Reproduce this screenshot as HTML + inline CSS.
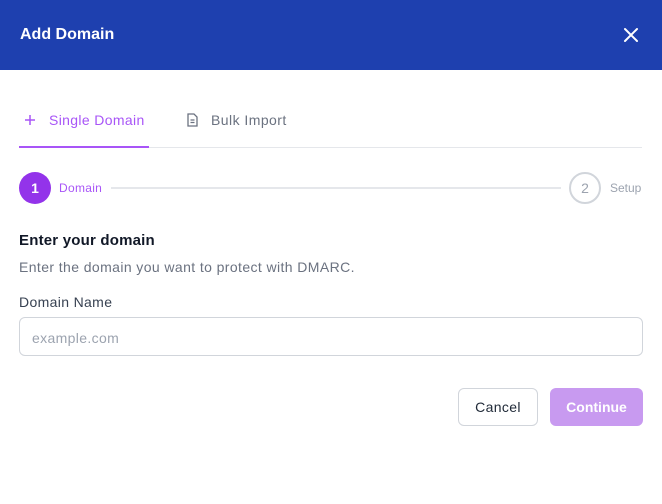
<!DOCTYPE html>
<html><head><meta charset="utf-8"><style>
*{box-sizing:border-box;margin:0;padding:0}
body{width:662px;height:504px;background:#fff;font-family:"Liberation Sans",sans-serif;position:relative;overflow:hidden}
.hdr{position:absolute;left:0;top:0;width:662px;height:70px;background:#1e40af;color:#fff}
.hdr h1{position:absolute;left:20px;top:26px;font-size:16px;font-weight:bold}
.abs{position:absolute}
.t{letter-spacing:0.35px}
</style></head><body>
<div class="hdr"><h1>Add Domain</h1>
<svg class="abs" style="left:622px;top:26px" width="18" height="18" viewBox="0 0 18 18"><path d="M3 3L15 15M15 3L3 15" stroke="#fff" stroke-width="2" stroke-linecap="round"/></svg>
</div>
<div class="abs" style="left:19px;top:147px;width:623px;height:1px;background:#e5e7eb"></div>
<div class="abs" style="left:19px;top:146px;width:130px;height:2px;background:#a855f7"></div>
<svg class="abs" style="left:24px;top:114px" width="12" height="12" viewBox="0 0 12 12"><path d="M6 1V11M1 6H11" stroke="#a855f7" stroke-width="1.5"/></svg>
<div class="abs t" style="left:49px;top:112px;font-size:14px;color:#a855f7">Single Domain</div>
<svg class="abs" style="left:186px;top:113px" width="13" height="14" viewBox="0 0 13 14"><path d="M2 1H8L11 4V13H2Z M4.5 7H8.5M4.5 9.5H8.5" fill="none" stroke="#6b7280" stroke-width="1.3"/></svg>
<div class="abs t" style="left:211px;top:112px;font-size:14px;color:#6b7280;letter-spacing:0.45px">Bulk Import</div>
<div class="abs" style="left:19px;top:172px;width:32px;height:32px;border-radius:50%;background:#9333ea;color:#fff;font-size:14px;font-weight:bold;text-align:center;line-height:32px">1</div>
<div class="abs" style="left:59px;top:181px;font-size:12px;color:#a855f7;letter-spacing:0.3px">Domain</div>
<div class="abs" style="left:111px;top:187px;width:450px;height:2px;background:#e5e7eb"></div>
<div class="abs" style="left:569px;top:172px;width:32px;height:32px;border-radius:50%;border:2px solid #d1d5db;color:#9ca3af;font-size:14px;text-align:center;line-height:28px">2</div>
<div class="abs" style="left:610px;top:181px;font-size:12px;color:#9ca3af">Setup</div>
<div class="abs" style="left:19px;top:232px;font-size:15px;font-weight:bold;color:#111827;letter-spacing:0.2px">Enter your domain</div>
<div class="abs" style="left:19px;top:259px;font-size:14px;color:#6b7280;letter-spacing:0.4px">Enter the domain you want to protect with DMARC.</div>
<div class="abs t" style="left:19px;top:294px;font-size:14px;color:#374151">Domain Name</div>
<div class="abs t" style="left:19px;top:317px;width:624px;height:39px;border:1px solid #d1d5db;border-radius:6px;font-size:14px;color:#9ca3af;padding:12px 12px">example.com</div>
<div class="abs t" style="left:458px;top:388px;width:80px;height:38px;border:1px solid #d1d5db;border-radius:6px;font-size:14px;color:#1f2937;text-align:center;line-height:36px">Cancel</div>
<div class="abs" style="left:550px;top:388px;width:93px;height:38px;background:#c89af0;border-radius:6px;font-size:14px;font-weight:bold;color:#fff;text-align:center;line-height:38px">Continue</div>
</body></html>
